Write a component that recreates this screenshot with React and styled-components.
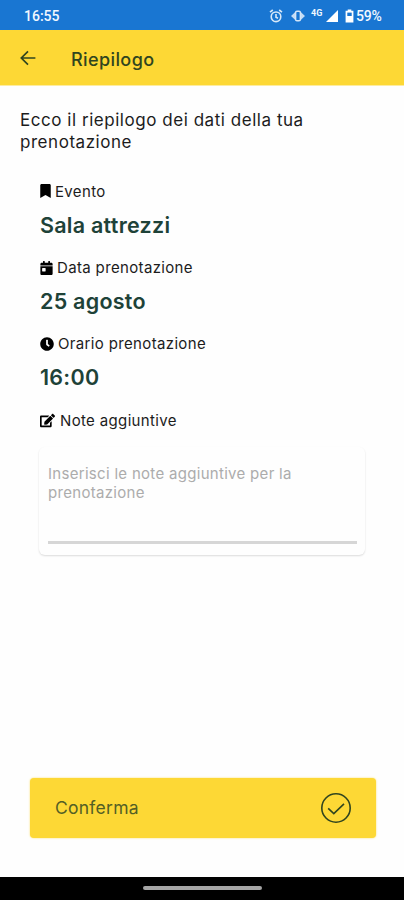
import React from 'react';
import styled, { createGlobalStyle } from 'styled-components';
import { FaBookmark, FaCalendarDay, FaClock, FaEdit } from 'react-icons/fa';

function App() {
  return (
    <>
      <GlobalStyle />
      <Screen>
        <StatusBar>
          <Clock>16:55</Clock>
          <StatusIcons />
          <Battery>59%</Battery>
        </StatusBar>
        <Header>
          <BackIcon viewBox="0 0 16 16">
            <path d="M15.4 8H1.4M8 1.3L1.3 8L8 14.7" />
          </BackIcon>
          <Title>Riepilogo</Title>
        </Header>
        <Main>
          <Intro>
            <Line $spacing="0.54px">Ecco il riepilogo dei dati della tua</Line>
            <Line $spacing="0.54px">prenotazione</Line>
          </Intro>
          <Details>
            <Field icon={<FaBookmark size={14} />} iconWidth={11} label="Evento" value="Sala attrezzi" />
            <Field icon={<FaCalendarDay size={14} />} iconWidth={13} label="Data prenotazione" value="25 agosto" />
            <Field icon={<FaClock size={14} />} iconWidth={14} label="Orario prenotazione" value="16:00" />
            <Field icon={<FaEdit size={15} />} iconWidth={15} gap={5} label="Note aggiuntive" />
          </Details>
          <NotesCard>
            <Placeholder>
              <Line $spacing="0.3px">Inserisci le note aggiuntive per la</Line>
              <Line $spacing="0.3px">prenotazione</Line>
            </Placeholder>
          </NotesCard>
        </Main>
        <ConfirmButton>
          <ButtonText>Conferma</ButtonText>
          <CheckIcon viewBox="0 0 32 32">
            <circle cx="16" cy="16" r="14.2" />
            <path d="M8.2 16.4L13.8 21.6L24 11.8" />
          </CheckIcon>
        </ConfirmButton>
        <NavBar>
          <Pill />
        </NavBar>
      </Screen>
    </>
  );
}

export default App;

function Field({ icon, iconWidth, gap = 4, label, value }) {
  return (
    <FieldBox>
      <Label>
        <IconSlot $width={iconWidth} $gap={gap}>
          {icon}
        </IconSlot>
        {label}
      </Label>
      {value && <Value>{value}</Value>}
    </FieldBox>
  );
}

function StatusIcons() {
  return (
    <>
      <Glyph $width={14} $right={8} viewBox="0 0 14 14">
        <circle cx="7" cy="7.8" r="4.8" fill="none" stroke="#d8e8f8" strokeWidth="1.6" />
        <path d="M7 5V8.2L9 9.2M1 3.2L3.8 1M13 3.2L10.2 1" fill="none" stroke="#d8e8f8" strokeWidth="1.6" />
      </Glyph>
      <Glyph $width={14} $right={6} viewBox="0 0 14 14">
        <path d="M4 3.2L0 7L4 10.8ZM10 3.2L14 7L10 10.8Z" fill="#c4dcf5" />
        <rect x="4.6" y="2.2" width="4.8" height="9.6" rx="1.4" fill="none" stroke="#d3e5f8" strokeWidth="1.5" />
      </Glyph>
      <Network>4G</Network>
      <Glyph $width={12} $right={7} viewBox="0 0 12 14">
        <path d="M12 1V13H0Z" fill="#fff" />
      </Glyph>
      <Glyph $width={9} $right={2} viewBox="0 0 9 14">
        <path d="M2.7 0.4H6.3V1.8H8.4V13.4H0.6V1.8H2.7Z" fill="#fff" />
        <rect x="2.3" y="3.6" width="4.4" height="3.4" fill="#1976d2" />
      </Glyph>
    </>
  );
}

const GlobalStyle = createGlobalStyle`
  * {
    box-sizing: border-box;
  }
  body {
    margin: 0;
    background: #fefefe;
  }
`;

const Screen = styled.div`
  width: 404px;
  height: 900px;
  display: flex;
  flex-direction: column;
  background: #fefefe;
  font-family: Inter, sans-serif;
  color: #1c1c1c;
  overflow: hidden;
`;

const StatusBar = styled.div`
  height: 30px;
  flex: none;
  display: flex;
  align-items: center;
  padding: 2px 22px 0 24px;
  background: #1976d2;
  color: #f2f8ff;
  font-family: Roboto, sans-serif;
`;

const Clock = styled.span`
  margin-right: auto;
  font-size: 14px;
  font-weight: 500;
`;

const Glyph = styled.svg`
  width: ${({ $width }) => $width}px;
  height: 14px;
  margin-right: ${({ $right }) => $right}px;
  flex: none;
`;

const Network = styled.span`
  width: 12px;
  margin-right: 3px;
  padding-bottom: 5px;
  font-size: 9px;
  line-height: 9px;
  font-weight: 700;
`;

const Battery = styled.span`
  width: 26px;
  font-size: 14px;
  font-weight: 500;
  letter-spacing: -0.2px;
`;

const Header = styled.header`
  height: 56px;
  flex: none;
  display: flex;
  align-items: center;
  padding-left: 20px;
  background: #fdd835;
  border-bottom: 1px solid #fdeca0;
`;

const BackIcon = styled.svg`
  width: 16px;
  height: 16px;
  margin-right: 35px;
  fill: none;
  stroke: #30451f;
  stroke-width: 1.7;
`;

const Title = styled.h1`
  margin: 4px 0 0;
  font-size: 18px;
  font-weight: 500;
  line-height: 24px;
  letter-spacing: 0.4px;
  color: #30451f;
`;

const Main = styled.main`
  flex: 1;
  padding: 23px 20px 0;
`;

const Intro = styled.p`
  margin: 0;
  font-size: 17px;
  line-height: 22px;
`;

const Line = styled.span`
  display: block;
  white-space: nowrap;
  letter-spacing: ${({ $spacing }) => $spacing || 'normal'};
`;

const Details = styled.div`
  padding: 28.4px 0 0 20px;
`;

const FieldBox = styled.div`
  &:not(:last-child) {
    height: 76.3px;
  }
`;

const Label = styled.div`
  display: flex;
  align-items: center;
  height: 20px;
  font-size: 15px;
  letter-spacing: 0.35px;
  white-space: nowrap;
`;

const IconSlot = styled.span`
  width: ${({ $width }) => $width}px;
  margin-right: ${({ $gap }) => $gap}px;
  display: flex;
  justify-content: center;
  color: #000;
`;

const Value = styled.div`
  padding-top: 9.5px;
  font-size: 21.5px;
  font-weight: 600;
  line-height: 28px;
  letter-spacing: 0.26px;
  color: #1e4238;
`;

const NotesCard = styled.div`
  width: 326px;
  height: 108px;
  margin: 16.7px 0 0 19px;
  padding: 17px 8px 11px 9px;
  border-radius: 6px;
  box-shadow: 0 1px 2px rgba(0, 0, 0, 0.14);
`;

const Placeholder = styled.div`
  height: 80px;
  border-bottom: 3px solid #d6d6d6;
  font-size: 15px;
  line-height: 19px;
  color: #acacac;
`;

const ConfirmButton = styled.button`
  width: 346px;
  height: 60px;
  flex: none;
  margin: 0 0 39px 30px;
  padding: 0 24px 0 25px;
  display: flex;
  align-items: center;
  justify-content: space-between;
  border: none;
  border-radius: 4px;
  background: #fdd835;
  box-shadow: 0 0 2px rgba(253, 216, 53, 0.8);
  font-family: inherit;
  font-size: 17.5px;
  letter-spacing: 0.25px;
  color: #535f25;
`;

const ButtonText = styled.span`
  margin-bottom: 2px;
`;

const CheckIcon = styled.svg`
  width: 32px;
  height: 32px;
  fill: none;
  stroke: #30451f;
  stroke-width: 1.6;
`;

const NavBar = styled.div`
  height: 23px;
  flex: none;
  padding-top: 9px;
  background: #000;
`;

const Pill = styled.div`
  width: 119px;
  height: 4px;
  margin-left: 143px;
  border-radius: 2px;
  background: #a5a5a5;
`;
